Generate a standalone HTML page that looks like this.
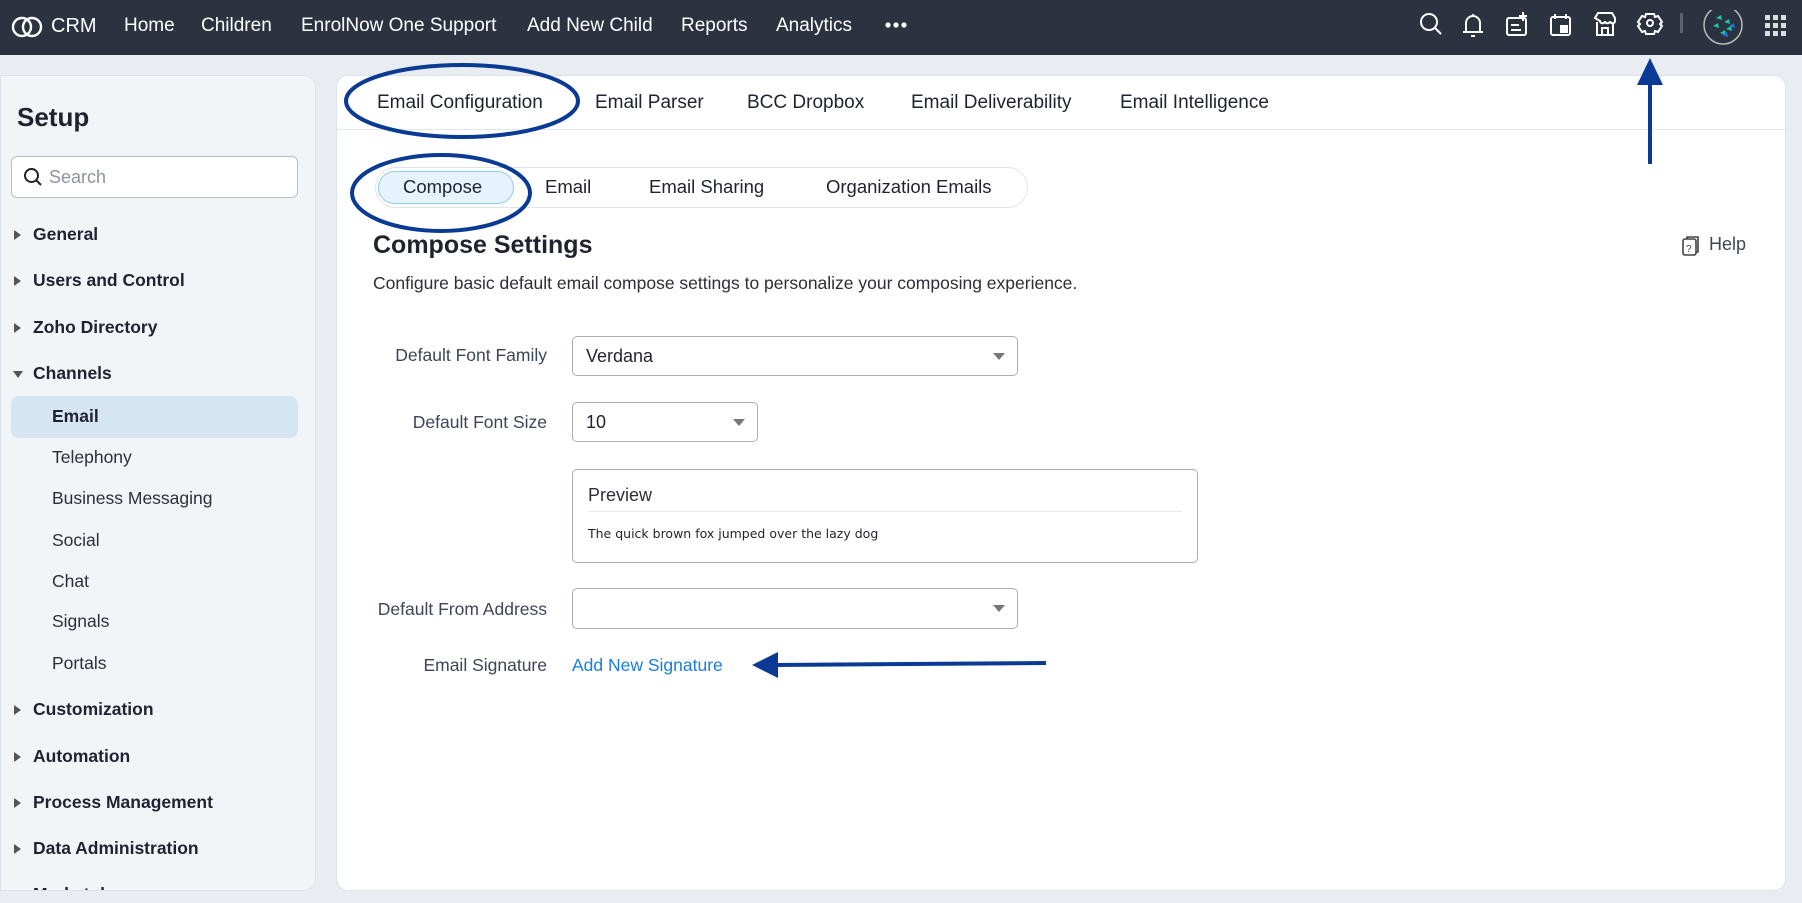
<!DOCTYPE html>
<html><head><meta charset="utf-8"><style>
*{box-sizing:border-box;margin:0;padding:0}
body{width:1802px;height:903px;overflow:hidden;background:#e9edf2;font-family:"Liberation Sans",sans-serif;position:relative;color:#1f2330}
.a{position:absolute;white-space:nowrap}
.top{position:absolute;left:0;top:0;width:1802px;height:55px;background:#2b3240}
.nav{color:#fff;font-size:19px;top:15px}
.side{position:absolute;left:0;top:75px;width:316px;height:816px;background:#f2f5f8;border:1px solid #dbe3ec;border-radius:0 12px 12px 0;overflow:hidden}
.si{position:absolute;font-size:17.5px;font-weight:bold;color:#1f2330;left:32px}
.si:before{content:"";position:absolute;left:-19px;top:6px;border-left:7px solid #555;border-top:5px solid transparent;border-bottom:5px solid transparent}
.si.dn:before{border-top:7px solid #555;border-left:5px solid transparent;border-right:5px solid transparent;border-bottom:0;top:8px;left:-20px}
.ch{position:absolute;font-size:17.5px;color:#2a2f3a;left:51px}
.main{position:absolute;left:336px;top:75px;width:1450px;height:816px;background:#fff;border:1px solid #dbe3ec;border-radius:12px}
.tab{font-size:19px;color:#1f2330;top:92px}
.sub{font-size:18.5px;color:#1f2330;top:176px}
.lbl{font-size:17.5px;color:#3d4658;right:1255px}
.sel{position:absolute;border:1px solid #a9afb8;border-radius:5px;background:#fff}
.sel span{position:absolute;left:13px;top:9px;font-size:18px;color:#1f2330}
.sel i{position:absolute;right:12px;top:16px;border-top:7px solid #777;border-left:6px solid transparent;border-right:6px solid transparent}
</style></head><body>
<div class="top"></div>
<svg class="a" style="left:11px;top:12px" width="32" height="30" viewBox="0 0 32 30"><g fill="none" stroke="#fff" stroke-width="2.4"><circle cx="11" cy="15" r="9"/><circle cx="21" cy="15" r="9"/></g></svg>
<div class="a nav" style="left:51px;font-size:20px">CRM</div>
<div class="a nav" style="left:124px">Home</div>
<div class="a nav" style="left:201px">Children</div>
<div class="a nav" style="left:301px">EnrolNow One Support</div>
<div class="a nav" style="left:527px">Add New Child</div>
<div class="a nav" style="left:681px">Reports</div>
<div class="a nav" style="left:776px">Analytics</div>
<svg class="a" style="left:884px;top:21px" width="26" height="8"><circle cx="4" cy="4" r="2.6" fill="#fff"/><circle cx="12" cy="4" r="2.6" fill="#fff"/><circle cx="20" cy="4" r="2.6" fill="#fff"/></svg>
<svg class="a" style="left:1415px;top:10px" width="380" height="36" viewBox="1415 10 380 36"><g fill="none" stroke="#fff" stroke-width="2">
<circle cx="1429" cy="22" r="8"/><path d="M1435 28l6 6"/>
<path d="M1466 32v-9a7 7 0 0 1 14 0v9zM1463 32h20M1471 36h4M1473 14v2"/>
<rect x="1507" y="18" width="19" height="17" rx="2"/><path d="M1511 25h8M1511 30h10M1523 12v9M1519 16h8"/>
<rect x="1551" y="17" width="19" height="18" rx="2"/><path d="M1555 14v5M1566 14v5"/><rect x="1561" y="26" width="6" height="6" fill="#fff"/>
<path d="M1595 18l3-5h14l3 5v3c0 3-5 3-5 0c0 3-5 3-5 0c0 3-5 3-5 0zM1597 22v13h16V22M1602 35v-7h6v7"/>
<circle cx="1650" cy="23" r="3"/><path d="M1646 14h8l1 3 3-1 4 6-2 2 2 2-4 6-3-1-1 3h-8l-1-3-3 1-4-6 2-2-2-2 4-6 3 1z"/>
</g>
<rect x="1680" y="13" width="3" height="20" fill="#5a6270"/>
<circle cx="1723" cy="25" r="19" fill="#2b3240" stroke="#bbb" stroke-width="1.5"/>
<path d="M1716 18l5-3 1 5zM1724 22l5-3 1 5zM1713 26l5-3 1 5zM1726 29l5-3 1 5zM1720 33l5-3 1 5z" fill="#19c9a6"/>
<path d="M1729 26l5-3 1 5zM1722 35l5-3 1 5z" fill="#2a6fe0"/>
<g fill="#ddd"><rect x="1765" y="15" width="5" height="5"/><rect x="1773" y="15" width="5" height="5"/><rect x="1781" y="15" width="5" height="5"/><rect x="1765" y="23" width="5" height="5"/><rect x="1773" y="23" width="5" height="5"/><rect x="1781" y="23" width="5" height="5"/><rect x="1765" y="31" width="5" height="5"/><rect x="1773" y="31" width="5" height="5"/><rect x="1781" y="31" width="5" height="5"/></g>
</svg>

<div class="side">
<div class="a" style="left:16px;top:26px;font-size:26px;font-weight:bold">Setup</div>
<div class="a" style="left:10px;top:80px;width:287px;height:42px;background:#fff;border:1px solid #b8bfc8;border-radius:6px"></div>
<svg class="a" style="left:22px;top:91px" width="20" height="20"><circle cx="8.5" cy="8.5" r="6.5" fill="none" stroke="#222" stroke-width="2"/><path d="M13 13l5 5" stroke="#222" stroke-width="2"/></svg>
<div class="a" style="left:48px;top:91px;font-size:18px;color:#8a93a0">Search</div>
<div class="si" style="top:148px">General</div>
<div class="si" style="top:194px">Users and Control</div>
<div class="si" style="top:241px">Zoho Directory</div>
<div class="si dn" style="top:287px">Channels</div>
<div class="a" style="left:10px;top:320px;width:287px;height:42px;background:#d5e5f4;border-radius:8px"></div>
<div class="ch" style="top:330px;font-weight:bold;color:#1f2330">Email</div>
<div class="ch" style="top:371px">Telephony</div>
<div class="ch" style="top:412px">Business Messaging</div>
<div class="ch" style="top:454px">Social</div>
<div class="ch" style="top:495px">Chat</div>
<div class="ch" style="top:535px">Signals</div>
<div class="ch" style="top:577px">Portals</div>
<div class="si" style="top:623px">Customization</div>
<div class="si" style="top:670px">Automation</div>
<div class="si" style="top:716px">Process Management</div>
<div class="si" style="top:762px">Data Administration</div>
<div class="si" style="top:808px">Marketplace</div>
</div>

<div class="main">
<div class="a" style="left:0;top:53px;width:1448px;height:1px;background:#e3e7ec"></div>
</div>
<div class="a tab" style="left:377px">Email Configuration</div>
<div class="a tab" style="left:595px">Email Parser</div>
<div class="a tab" style="left:747px">BCC Dropbox</div>
<div class="a tab" style="left:911px">Email Deliverability</div>
<div class="a tab" style="left:1120px">Email Intelligence</div>

<div class="a" style="left:375px;top:167px;width:653px;height:41px;border:1px solid #e0e4ea;border-radius:21px"></div>
<div class="a" style="left:378px;top:171px;width:136px;height:33px;background:#e5f3fd;border:1px solid #8ccaf0;border-radius:17px"></div>
<div class="a sub" style="left:403px">Compose</div>
<div class="a sub" style="left:545px">Email</div>
<div class="a sub" style="left:649px">Email Sharing</div>
<div class="a sub" style="left:826px">Organization Emails</div>

<div class="a" style="left:373px;top:231px;font-size:25px;font-weight:bold">Compose Settings</div>
<div class="a" style="left:373px;top:273px;font-size:17.5px;color:#2a2f3a">Configure basic default email compose settings to personalize your composing experience.</div>
<svg class="a" style="left:1681px;top:235px" width="20" height="22"><rect x="2" y="4" width="13" height="16" rx="2" fill="none" stroke="#444" stroke-width="1.6"/><path d="M6 4V2h11v15h-2" fill="none" stroke="#444" stroke-width="1.6"/><text x="5" y="17" font-size="10" fill="#444" font-family="Liberation Sans">?</text></svg>
<div class="a" style="left:1709px;top:234px;font-size:18px;color:#3d4658">Help</div>

<div class="a lbl" style="top:345px">Default Font Family</div>
<div class="sel" style="left:572px;top:336px;width:446px;height:40px"><span>Verdana</span><i></i></div>
<div class="a lbl" style="top:412px">Default Font Size</div>
<div class="sel" style="left:572px;top:402px;width:186px;height:40px"><span>10</span><i></i></div>
<div class="a" style="left:572px;top:469px;width:626px;height:94px;border:1px solid #a9afb8;border-radius:5px"></div>
<div class="a" style="left:588px;top:485px;font-size:18px;color:#2a2f3a">Preview</div>
<div class="a" style="left:588px;top:511px;width:594px;height:1px;background:#e6e9ed"></div>
<div class="a" style="left:588px;top:526px;font-size:12.5px;color:#1f2330;font-family:'DejaVu Sans',sans-serif">The quick brown fox jumped over the lazy dog</div>
<div class="a lbl" style="top:599px">Default From Address</div>
<div class="sel" style="left:572px;top:588px;width:446px;height:41px"><i></i></div>
<div class="a lbl" style="top:655px">Email Signature</div>
<div class="a" style="left:572px;top:655px;font-size:17.5px;color:#1a7ee0">Add New Signature</div>

<svg class="a" style="left:0;top:0" width="1802" height="903">
<g fill="none" stroke="#0a3a94" stroke-width="4">
<ellipse cx="462" cy="101" rx="116" ry="36"/>
<ellipse cx="441" cy="193" rx="89" ry="38"/>
<path d="M1046 663L775 665"/>
<path d="M1650 164V80"/>
</g>
<path d="M752 665l26-13v26z" fill="#0a3a94"/>
<path d="M1650 58l-13 27h26z" fill="#0a3a94"/>
</svg>
</body></html>
